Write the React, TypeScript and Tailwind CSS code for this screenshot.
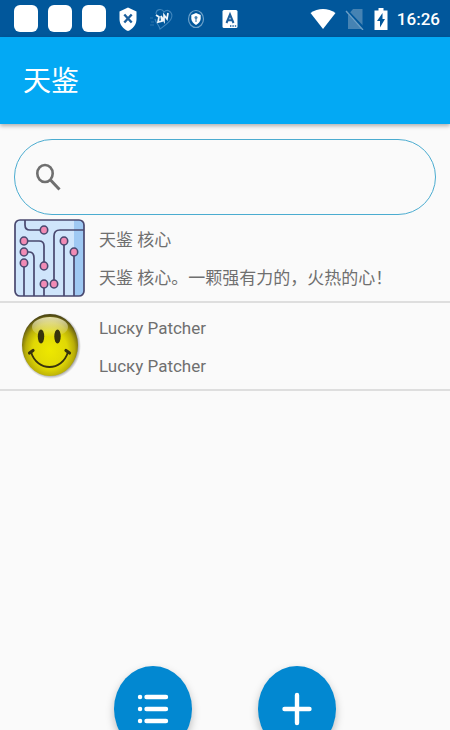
import { useState } from 'react';

interface AppItem {
    title: string;
    description: string;
    icon: 'circuit' | 'smiley';
}

const ITEMS: AppItem[] = [
    { title: '天鉴 核心', description: '天鉴 核心。一颗强有力的，火热的心！', icon: 'circuit' },
    { title: 'Lucкy Patcher', description: 'Lucкy Patcher', icon: 'smiley' },
];

function StatusBar() {
    return (
        <div className="flex h-[37px] items-center justify-between bg-[#01579b] pl-[14px] pr-[10px] text-white">
            <div className="flex items-center gap-[10px]">
                <span className="h-[27px] w-6 rounded-md bg-white" />
                <span className="h-[27px] w-6 rounded-md bg-white" />
                <span className="h-[27px] w-6 rounded-md bg-white" />
                {/* Shield with cross */}
                <svg viewBox="0 0 24 28" className="h-7 w-6">
                    <path d="M12 2.500 L20.500 6.500 V14 C20.500 19.500 17 24 12 26 C7 24 3.500 19.500 3.500 14 V6.500 Z" fill="#fff" />
                    <path d="M8.300 9.500 L15.700 17.500 M15.700 9.500 L8.300 17.500" stroke="#1d5f9c" strokeWidth="2.400" />
                </svg>
                {/* Heart */}
                <svg viewBox="0 0 24 28" className="h-7 w-6" fill="none">
                    <path d="M6 9 C6 4 12 3 14 7 C18 3 24 8 21 14 C19 18 14 21 10 24 C9 20 6 18 5 14" stroke="#3f86bd" strokeWidth="1.100" />
                    <path d="M0 13 H3 M1 17 H4 M0 20 H4" stroke="#2d74ac" strokeWidth="1" />
                    <path d="M6 10 L9 12 L8 17 L12 16 L11 11 L14 16 L14 10 L17 14 L18 8" stroke="#eef5fa" strokeWidth="1.700" />
                </svg>
                {/* Round VPN shield */}
                <svg viewBox="0 0 24 28" className="h-7 w-6">
                    <ellipse cx="12" cy="14" rx="7.500" ry="8.500" fill="none" stroke="#6ba0c9" strokeWidth="1.200" />
                    <path d="M12 8 L16.700 10 V13.500 C16.700 16.500 14.500 18.500 12 20 C9.500 18.500 7.300 16.500 7.300 13.500 V10 Z" fill="#fff" />
                    <circle cx="12" cy="12.500" r="1.500" fill="#4683b3" />
                    <path d="M12 13 V17" stroke="#4683b3" strokeWidth="1.200" />
                </svg>
                {/* Keyboard */}
                <svg viewBox="0 0 24 28" className="h-7 w-6">
                    <rect x="4.500" y="5" width="15" height="18" rx="1.500" fill="#fff" />
                    <path d="M8.500 18 L12 9.500 L15.500 18 M9.700 15.300 H14.300" fill="none" stroke="#1d5f9c" strokeWidth="2" />
                    <path d="M12 21 H18.500" stroke="#1d5f9c" strokeWidth="1.400" strokeDasharray="1.400 1" />
                </svg>
            </div>

            <div className="flex items-center gap-[9px]">
                <svg viewBox="0 0 26 22" className="h-[22px] w-[26px]">
                    <path d="M0.500 5 C8 -0.500 18 -0.500 25.500 5 L13 21 Z" fill="#fff" />
                </svg>
                <svg viewBox="0 0 20 22" className="h-[22px] w-5">
                    <path d="M8 1 H17.500 V21 H3 V7 Z" fill="#4683b3" />
                    <path d="M1 2 L19 21" stroke="#01579b" strokeWidth="3" />
                    <path d="M1 3 L18 22" stroke="#6d9fc6" strokeWidth="1.400" />
                </svg>
                <svg viewBox="0 0 14 24" className="h-6 w-[14px]">
                    <path d="M4.500 1 H9.500 V3.500 H13.500 V23 H0.500 V3.500 H4.500 Z" fill="#fff" />
                    <path d="M8.500 6 L3 14 H6 V20.500 L11 12 H8.500 Z" fill="#01579b" />
                </svg>
                <time className="font-['Roboto',sans-serif] text-[17px] leading-6 font-medium">16:26</time>
            </div>
        </div>
    );
}

function CircuitIcon() {
    const nodes = [[30, 11], [10, 22], [10, 33], [10, 44], [50, 22], [60, 33], [30, 47], [30, 65], [40, 65]];

    return (
        <svg viewBox="0 0 71 78" className="h-[78px] w-[71px]">
            <rect x="1" y="1" width="69" height="76" rx="5" fill="#cfe5fb" />
            <path d="M60 1 H65 Q70 1 70 6 V72 Q70 77 65 77 H60 Z" fill="#9fc9f3" />
            <g fill="none" stroke="#49486f" strokeWidth="1.700">
                <path d="M11 1 V6 Q11 11 16 11 H30" />
                <path d="M10 22 H25 Q30 22 30 27 V47" />
                <path d="M10 33 H15 Q20 33 20 39 V77" />
                <path d="M10 44 V77" />
                <path d="M70 11 H46 Q40 11 40 17 V65" />
                <path d="M50 22 V77 M60 33 V77 M30 65 V77" />
                <rect x="1" y="1" width="69" height="76" rx="5" />
            </g>
            {nodes.map(([x, y]) => (
                <ellipse key={`${x}-${y}`} cx={x} cy={y} rx="3.700" ry="4" fill="#f18bb5" stroke="#49486f" strokeWidth="1.600" />
            ))}
        </svg>
    );
}

function SmileyIcon() {
    return (
        <svg viewBox="0 0 71 78" className="h-[78px] w-[71px]">
            <defs>
                <radialGradient id="face" cx="50%" cy="58%" r="56%">
                    <stop offset="0" stopColor="#eee800" />
                    <stop offset="0.550" stopColor="#e0d805" />
                    <stop offset="0.780" stopColor="#b9ae08" />
                    <stop offset="0.920" stopColor="#7d740f" />
                    <stop offset="1" stopColor="#4f4915" />
                </radialGradient>
                <linearGradient id="shine" x1="0" y1="0" x2="0" y2="1">
                    <stop offset="0" stopColor="#fffbd0" stopOpacity="0.800" />
                    <stop offset="1" stopColor="#fff" stopOpacity="0" />
                </linearGradient>
                <radialGradient id="shade">
                    <stop offset="0.880" stopColor="#555" stopOpacity="0.600" />
                    <stop offset="1" stopColor="#777" stopOpacity="0" />
                </radialGradient>
            </defs>
            <ellipse cx="37" cy="39" rx="30" ry="33" fill="url(#shade)" />
            <ellipse cx="36" cy="38" rx="28" ry="31" fill="url(#face)" />
            <ellipse cx="36" cy="20" rx="18" ry="10" fill="url(#shine)" />
            <ellipse cx="27" cy="29.500" rx="3.200" ry="7" fill="#38330c" />
            <ellipse cx="43.500" cy="29.500" rx="3.200" ry="7" fill="#38330c" />
            <path d="M17 45 C23 65 48 65 54 45" fill="none" stroke="#38330c" strokeWidth="1.800" />
            <path d="M15.500 46 L19 43.500 M52 43.500 L55.500 46" stroke="#38330c" strokeWidth="3.200" strokeLinecap="round" />
        </svg>
    );
}

function SearchBox({ value, onChange }: { value: string; onChange: (value: string) => void }) {
    return (
        <label className="mx-[14px] mt-[15px] flex h-19 items-center rounded-full border border-[#4bacd0] pl-5">
            <svg viewBox="0 0 28 30" className="h-[30px] w-7 shrink-0" fill="none" stroke="#6f6f6f">
                <ellipse cx="10" cy="11.500" rx="7.700" ry="8.500" strokeWidth="2.600" />
                <path d="M15.500 18 L24.500 27.500" strokeWidth="3" />
            </svg>
            <input
                type="search"
                aria-label="搜索"
                value={value}
                onChange={(e) => onChange(e.target.value)}
                className="ml-2 mr-6 min-w-0 flex-1 bg-transparent text-[17px] outline-none"
            />
        </label>
    );
}

export default function App() {
    const [query, setQuery] = useState('');
    const items = ITEMS.filter((item) => item.title.toLowerCase().includes(query.toLowerCase()));

    return (
        <div className="flex h-screen flex-col bg-[#fafafa] font-['Roboto','Noto_Sans_CJK_SC',sans-serif]">
            <StatusBar />
            <header className="flex h-[87px] items-center bg-[#03a9f4] pt-[2px] pl-[23px] shadow-[0_2px_4px_rgba(0,0,0,0.3)]">
                <h1 className="text-[28px] leading-10 text-white">天鉴</h1>
            </header>

            <SearchBox value={query} onChange={setQuery} />

            <ul>
                {items.map((item) => (
                    <li key={item.title} className="flex h-[88px] items-center gap-[14px] border-b-2 border-[#dedede] pl-[14px]">
                        {item.icon === 'circuit' ? <CircuitIcon /> : <SmileyIcon />}
                        <div className="pt-[2px] text-[17px] leading-[38px] text-[#6f6f6f]">
                            <p>{item.title}</p>
                            <p>{item.description}</p>
                        </div>
                    </li>
                ))}
            </ul>

            {/* Bottom actions run past the edge of the window */}
            <footer className="mt-auto flex h-19 items-start justify-center gap-[66px] overflow-hidden pt-3">
                <button
                    type="button"
                    aria-label="列表"
                    className="flex h-[86px] w-[78px] shrink-0 items-center justify-center rounded-[50%] bg-[#0288d1] shadow-[0_4px_8px_rgba(0,0,0,0.25)]"
                >
                    <svg viewBox="0 0 32 34" className="h-[34px] w-8" stroke="#fff" strokeWidth="4.400" strokeLinecap="round">
                        <path d="M3 5 H3.100 M3 17 H3.100 M3 29 H3.100" />
                        <path d="M9.500 5 H29 M9.500 17 H29 M9.500 29 H29" />
                    </svg>
                </button>
                <button
                    type="button"
                    aria-label="添加"
                    className="flex h-[86px] w-[78px] shrink-0 items-center justify-center rounded-[50%] bg-[#0288d1] shadow-[0_4px_8px_rgba(0,0,0,0.25)]"
                >
                    <svg viewBox="0 0 32 34" className="h-[34px] w-8" stroke="#fff" strokeWidth="4.400" strokeLinecap="round">
                        <path d="M16 3 V31 M3.500 17 H28.500" />
                    </svg>
                </button>
            </footer>
        </div>
    );
}
